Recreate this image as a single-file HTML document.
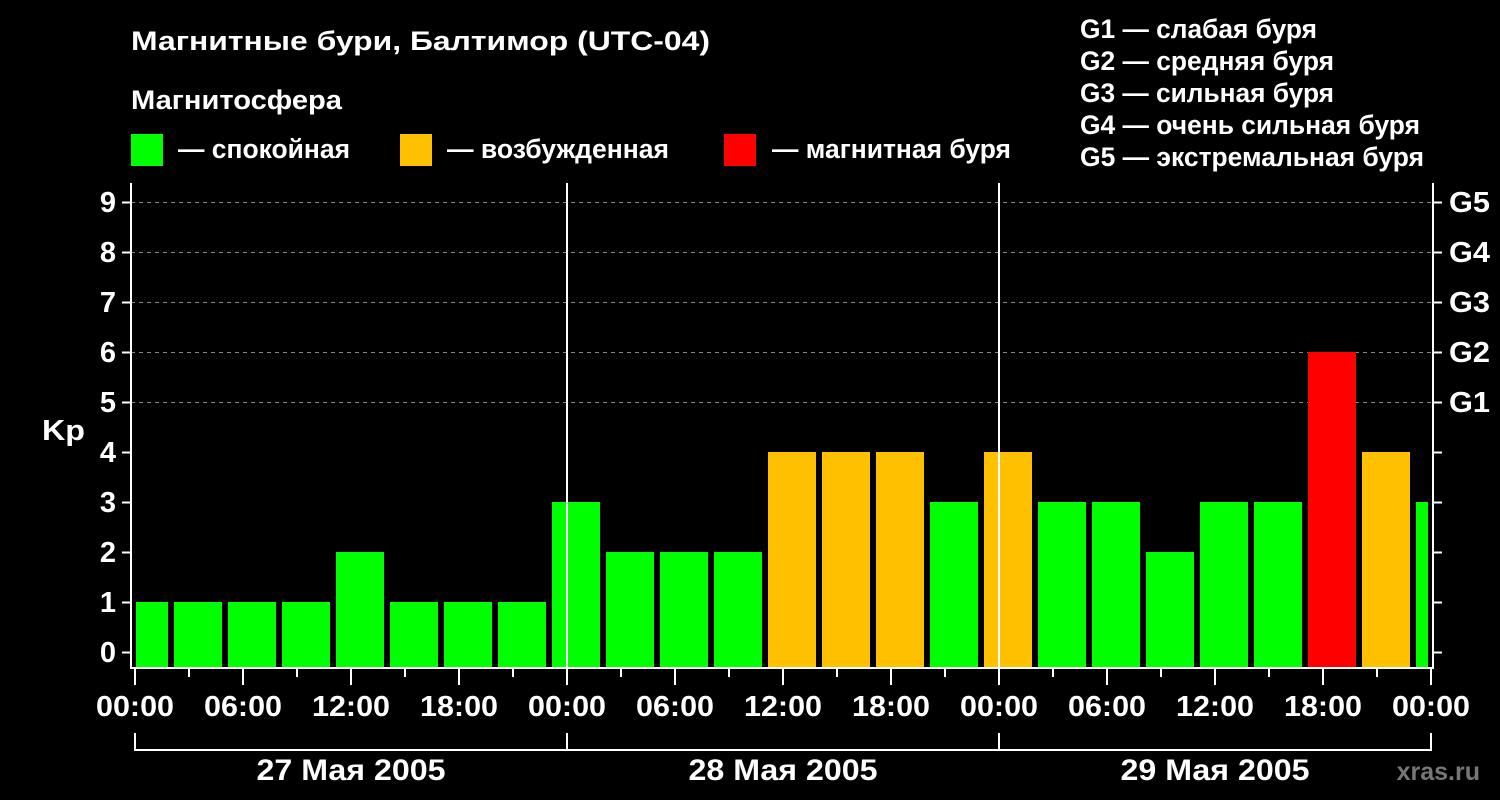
<!DOCTYPE html>
<html><head><meta charset="utf-8"><style>
html,body{margin:0;padding:0;background:#000;width:1500px;height:800px;overflow:hidden}
svg{display:block;font-family:"Liberation Sans",sans-serif;font-weight:bold}
</style></head><body>
<svg width="1500" height="800" xmlns="http://www.w3.org/2000/svg">
<rect width="1500" height="800" fill="#000"/>
<g fill="#fff" font-size="27" lengthAdjust="spacingAndGlyphs">
<text x="131" y="50" textLength="579" lengthAdjust="spacingAndGlyphs">Магнитные бури, Балтимор (UTC-04)</text>
<text x="131" y="109" textLength="211" lengthAdjust="spacingAndGlyphs">Магнитосфера</text>
<text x="178" y="158" textLength="172" lengthAdjust="spacingAndGlyphs">— спокойная</text>
<text x="447" y="158" textLength="222" lengthAdjust="spacingAndGlyphs">— возбужденная</text>
<text x="772" y="158" textLength="239" lengthAdjust="spacingAndGlyphs">— магнитная буря</text>
<text x="1080" y="38" textLength="237" lengthAdjust="spacingAndGlyphs">G1 — слабая буря</text>
<text x="1080" y="70" textLength="254" lengthAdjust="spacingAndGlyphs">G2 — средняя буря</text>
<text x="1080" y="102" textLength="254" lengthAdjust="spacingAndGlyphs">G3 — сильная буря</text>
<text x="1080" y="134" textLength="340" lengthAdjust="spacingAndGlyphs">G4 — очень сильная буря</text>
<text x="1080" y="166" textLength="344" lengthAdjust="spacingAndGlyphs">G5 — экстремальная буря</text>
</g>
<rect x="131" y="134" width="32" height="32" fill="#00ff00"/>
<rect x="400" y="134" width="32" height="32" fill="#ffc000"/>
<rect x="724" y="134" width="32" height="32" fill="#ff0000"/>
<g stroke="#888" stroke-dasharray="4,4" stroke-width="1">
<line x1="131" x2="1433" y1="202.5" y2="202.5"/><line x1="131" x2="1433" y1="252.5" y2="252.5"/>
<line x1="131" x2="1433" y1="302.5" y2="302.5"/><line x1="131" x2="1433" y1="352.5" y2="352.5"/>
<line x1="131" x2="1433" y1="402.5" y2="402.5"/>
</g>
<g id="bars"></g>
<g stroke="#fff" stroke-width="2" fill="none">
<polyline points="131,183 131,668 1433,668 1433,183"/>
<line x1="567" y1="183" x2="567" y2="668"/><line x1="999" y1="183" x2="999" y2="668"/>
<polyline points="135,733 135,750 1431,750 1431,733"/>
<line x1="567" y1="733" x2="567" y2="750"/><line x1="999" y1="733" x2="999" y2="750"/>
</g>
<g id="ticks" stroke="#fff" stroke-width="2"></g>
<g fill="#fff" font-size="29" text-anchor="end">
<text x="116" y="212">9</text><text x="116" y="262">8</text><text x="116" y="312">7</text>
<text x="116" y="362">6</text><text x="116" y="412">5</text><text x="116" y="462">4</text>
<text x="116" y="512">3</text><text x="116" y="562">2</text><text x="116" y="612">1</text>
<text x="116" y="662">0</text>
</g>
<g fill="#fff" font-size="29">
<text x="42" y="440" textLength="43" lengthAdjust="spacingAndGlyphs">Kp</text>
<text x="1449" y="212" textLength="41" lengthAdjust="spacingAndGlyphs">G5</text><text x="1449" y="262" textLength="41" lengthAdjust="spacingAndGlyphs">G4</text><text x="1449" y="312" textLength="41" lengthAdjust="spacingAndGlyphs">G3</text>
<text x="1449" y="362" textLength="41" lengthAdjust="spacingAndGlyphs">G2</text><text x="1449" y="412" textLength="41" lengthAdjust="spacingAndGlyphs">G1</text>
</g>
<g id="xl" fill="#fff" font-size="29" text-anchor="middle"></g>
<g fill="#fff" font-size="30" text-anchor="middle">
<text x="351" y="780" textLength="189" lengthAdjust="spacingAndGlyphs">27 Мая 2005</text><text x="783" y="780" textLength="189" lengthAdjust="spacingAndGlyphs">28 Мая 2005</text><text x="1215" y="780" textLength="189" lengthAdjust="spacingAndGlyphs">29 Мая 2005</text>
</g>
<text x="1480" y="780" fill="#777" font-size="25" text-anchor="end">xras.ru</text>
</svg>
<script>
var ns="http://www.w3.org/2000/svg";
function el(p,t,a,txt){var e=document.createElementNS(ns,t);for(var k in a)e.setAttribute(k,a[k]);if(txt)e.textContent=txt;document.getElementById(p).appendChild(e);}
var v=[1,1,1,1,2,1,1,1,3,2,2,2,4,4,4,3,4,3,3,2,3,3,6,4,3];
v.forEach(function(k,i){var c=144+54*i,x1=Math.max(c-24,136),x2=Math.min(c+24,1428);
var col=k>=5?"#ff0000":(k==4?"#ffc000":"#00ff00");
el("bars","rect",{x:x1,y:652-50*k,width:x2-x1,height:668-(652-50*k),fill:col});});
for(var k=0;k<=9;k++){var y=652.5-50*k;el("ticks","line",{x1:122,x2:131,y1:y,y2:y});el("ticks","line",{x1:1433,x2:1442,y1:y,y2:y});}
var lab=["00:00","06:00","12:00","18:00"];
for(var i=0;i<=24;i++){var x=135+54*i;el("ticks","line",{x1:x,x2:x,y1:669,y2:i%2==0?685:677});
if(i%2==0)el("xl","text",{x:x,y:716,textLength:78,lengthAdjust:"spacingAndGlyphs"},lab[(i/2)%4]);}
</script>
</body></html>
